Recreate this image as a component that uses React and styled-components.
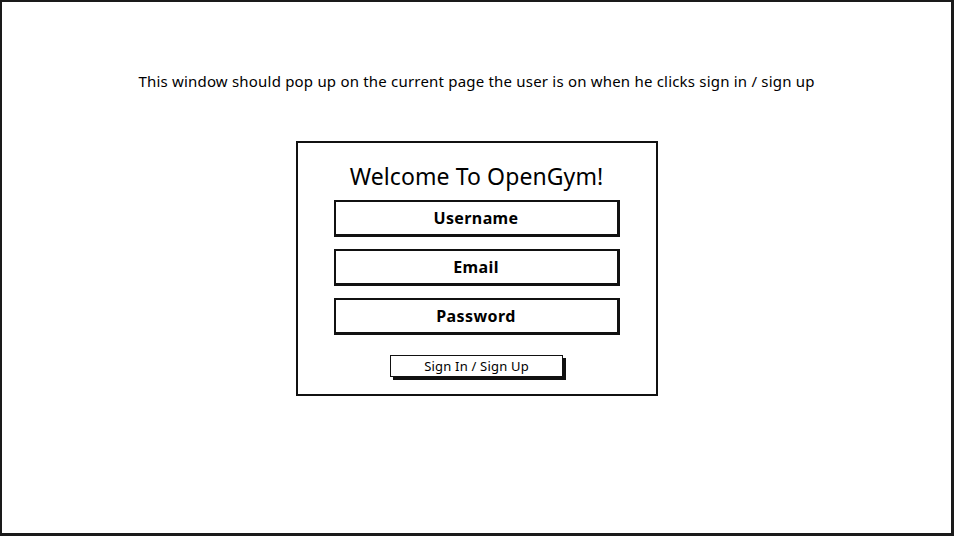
import React from "react";
import styled, { createGlobalStyle } from "styled-components";

const Global = createGlobalStyle`
  html, body { margin: 0; padding: 0; background: #fff; }
  body { font-family: "Noto Sans", "Liberation Sans", sans-serif; color: #000; }
`;

const Frame = styled.div`
  box-sizing: border-box;
  width: 954px;
  height: 536px;
  border: 2px solid #1a1a1a;
  border-right-width: 3px;
  border-bottom-width: 3px;
  display: flex;
  flex-direction: column;
  align-items: center;
  padding-top: 69px;
`;

const Note = styled.p`
  margin: 0;
  font-size: 15px;
  line-height: 20px;
  letter-spacing: 0.2px;
`;

const Dialog = styled.div`
  box-sizing: border-box;
  margin-top: 50px;
  width: 362px;
  height: 255px;
  border: 2px solid #111;
  display: flex;
  flex-direction: column;
  align-items: center;
  padding-top: 19px;
`;

const Title = styled.h1`
  margin: 0 0 10px;
  font-size: 23px;
  font-weight: 400;
  line-height: 28px;
  letter-spacing: 0.1px;
`;

const Fields = styled.div`
  display: flex;
  flex-direction: column;
  gap: 12px;
`;

const Field = styled.div`
  box-sizing: border-box;
  width: 286px;
  height: 37px;
  border: 2px solid #111;
  border-bottom-width: 3px;
  border-right-width: 3px;
  display: flex;
  align-items: center;
  justify-content: center;
  font-size: 16px;
  font-weight: 700;
  letter-spacing: 0.4px;
`;

const Button = styled.button`
  box-sizing: border-box;
  margin-top: 20px;
  width: 173px;
  height: 22px;
  border: 1.5px solid #111;
  background: #fff;
  box-shadow: 3px 3px 0 #111;
  font-family: inherit;
  font-size: 13px;
  line-height: 18px;
  letter-spacing: 0.2px;
  padding: 0;
  color: #000;
`;

export default function App() {
  return (
    <>
      <Global />
      <Frame>
        <Note>This window should pop up on the current page the user is on when he clicks sign in / sign up</Note>
        <Dialog>
          <Title>Welcome To OpenGym!</Title>
          <Fields>
            <Field>Username</Field>
            <Field>Email</Field>
            <Field>Password</Field>
          </Fields>
          <Button>Sign In / Sign Up</Button>
        </Dialog>
      </Frame>
    </>
  );
}
